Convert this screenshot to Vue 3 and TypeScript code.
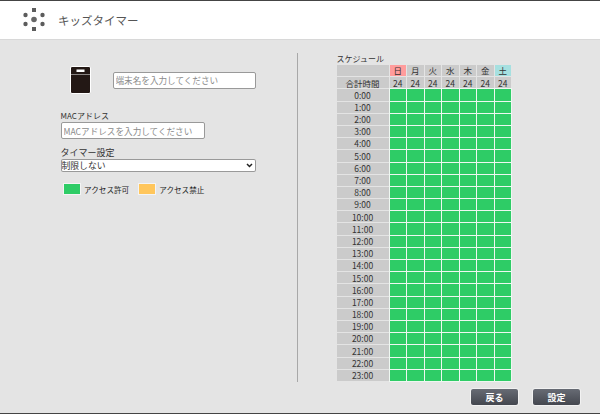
<script setup lang="ts">
const days = [
  { label: '日', cls: 'sun' },
  { label: '月', cls: '' },
  { label: '火', cls: '' },
  { label: '水', cls: '' },
  { label: '木', cls: '' },
  { label: '金', cls: '' },
  { label: '土', cls: 'sat' },
]
const hours = Array.from({ length: 24 }, (_, i) => `${i}:00`)
const dots = [
  { x: 5.5, y: 7 },
  { x: 22.5, y: 7 },
  { x: 5.5, y: 16 },
  { x: 22.5, y: 16 },
]
</script>

<template>
  <div class="window">
    <header class="head">
      <svg class="logo" width="28" height="24" viewBox="0 0 28 24">
        <circle cx="14" cy="11.5" r="2.8" fill="#666" />
        <rect x="12" y="0" width="4" height="4" fill="#5c5c5c" />
        <rect x="12" y="19" width="4" height="4" fill="#5c5c5c" />
        <circle v-for="d in dots" :key="d.x + '-' + d.y" :cx="d.x" :cy="d.y" r="2.2" fill="#5c5c5c" />
      </svg>
      <h1 class="title">キッズタイマー</h1>
    </header>

    <main class="body">
      <section class="left">
        <div class="device">
          <svg class="device-icon" width="21" height="28" viewBox="0 0 21 28">
            <rect x="0.5" y="0.5" width="20" height="27" rx="1.5" fill="#231815" stroke="#fff" />
            <rect x="6.5" y="3.5" width="8" height="2.5" fill="#fff" />
            <rect x="1" y="8" width="19" height="1" fill="#8a8583" />
          </svg>
          <input class="field name" type="text" placeholder="端末名を入力してください">
        </div>

        <label class="label mac-label">MACアドレス</label>
        <input class="field mac" type="text" placeholder="MACアドレスを入力してください">

        <label class="label timer-label">タイマー設定</label>
        <div class="timer-wrap">
          <select class="timer">
            <option>制限しない</option>
          </select>
          <svg class="chevron" width="7" height="5" viewBox="0 0 7 5">
            <path d="M1 1l2.5 2.5L6 1" fill="none" stroke="#222" stroke-width="1.5" />
          </svg>
        </div>

        <div class="legend">
          <span class="swatch allow"></span>
          <span class="legend-text">アクセス許可</span>
          <span class="swatch deny"></span>
          <span class="legend-text">アクセス禁止</span>
        </div>
      </section>

      <div class="divider"></div>

      <section class="right">
        <div class="sched-title">スケジュール</div>
        <div class="grid">
          <div class="cell gray"></div>
          <div v-for="d in days" :key="d.label" class="cell gray" :class="d.cls">{{ d.label }}</div>
          <div class="cell gray">合計時間</div>
          <div v-for="d in days" :key="'t' + d.label" class="cell gray">24</div>
          <template v-for="h in hours" :key="h">
            <div class="cell gray">{{ h }}</div>
            <div v-for="d in days" :key="h + d.label" class="cell on"></div>
          </template>
        </div>
      </section>
    </main>

    <footer class="foot">
      <button class="btn" type="button">戻る</button>
      <button class="btn" type="button">設定</button>
    </footer>
  </div>
</template>

<style>
html,
body {
  margin: 0;
  padding: 0;
}
</style>

<style scoped>
.window {
  width: 600px;
  height: 414px;
  box-sizing: border-box;
  display: flex;
  flex-direction: column;
  overflow: hidden;
  background: #e4e4e4;
  border-top: 1px solid #444;
  border-bottom: 1px solid #444;
  font-family: "Noto Sans CJK JP", "Liberation Sans", sans-serif;
  color: #333;
}

.head {
  height: 38px;
  flex-shrink: 0;
  display: flex;
  align-items: center;
  background: #fff;
  border-bottom: 1px solid #d8d8d8;
  padding-left: 20px;
}

.logo {
  margin-right: 10px;
}

.title {
  margin: 0;
  font-size: 11.5px;
  font-weight: 400;
  color: #555;
}

.body {
  flex: 1;
  display: flex;
  min-height: 0;
  padding-top: 13px;
}

.left {
  width: 297px;
  flex-shrink: 0;
  box-sizing: border-box;
  padding: 13px 0 0 60.5px;
  display: flex;
  flex-direction: column;
  align-items: flex-start;
}

.device {
  display: flex;
  align-items: center;
  margin-left: 9px;
  margin-bottom: 15px;
}

.device-icon {
  margin-right: 22px;
}

.field {
  box-sizing: border-box;
  height: 17px;
  padding: 0 2px;
  border: 1px solid #999;
  border-radius: 2px;
  background: #fff;
  font: inherit;
  font-size: 8.6px;
}

.field::placeholder {
  color: #8a8a8a;
}

.name {
  width: 143px;
}

.mac {
  width: 144px;
}

.label {
  font-size: 8px;
  line-height: 13px;
  color: #333;
}

.timer-label {
  margin-top: 7px;
  font-size: 9px;
}

.timer-wrap {
  position: relative;
  height: 13px;
}

.timer {
  display: block;
  box-sizing: border-box;
  width: 195px;
  height: 13px;
  padding: 0 0 0 1px;
  border: 0;
  border-radius: 2px;
  box-shadow: inset 0 0 0 1px #999;
  appearance: none;
  background: #fff;
  font: inherit;
  font-size: 8.8px;
  color: #333;
}

.chevron {
  position: absolute;
  top: 4px;
  right: 3px;
  pointer-events: none;
}

.legend {
  display: flex;
  align-items: center;
  margin: 11px 0 0 2.5px;
  font-size: 7.6px;
  color: #222;
}

.swatch {
  box-sizing: border-box;
  width: 18px;
  height: 12px;
  border: 1px solid #f4f4f4;
  margin-right: 3px;
}

.allow {
  background: #2ecc66;
}

.deny {
  background: #ffc65c;
}

.legend-text {
  margin-right: 9px;
}

.divider {
  width: 1px;
  height: 329px;
  background: #a8a8a8;
  flex-shrink: 0;
}

.right {
  padding-left: 38.5px;
}

.sched-title {
  font-size: 8px;
  line-height: 12px;
  color: #333;
}

.grid {
  width: 174.5px;
  display: grid;
  grid-template-columns: 52px repeat(7, 1fr);
  grid-auto-rows: 11.2px;
  gap: 1px;
}

.cell {
  display: flex;
  align-items: center;
  justify-content: center;
  font-size: 8.5px;
  line-height: 1;
  color: #333;
}

.gray {
  background: #cbcbcb;
}

.sun {
  background: #ff9c9c;
}

.sat {
  background: #a6e0e0;
}

.on {
  background: #2ecc66;
  box-shadow: 0 0 0 1px #eef7f1;
}

.foot {
  display: flex;
  justify-content: flex-end;
  gap: 13px;
  padding: 0 19px 7px 0;
}

.btn {
  width: 49px;
  height: 18px;
  padding: 0;
  border: 1px solid #f2f2f2;
  border-radius: 3px;
  background: linear-gradient(#676b74, #44474f);
  font: inherit;
  font-size: 9px;
  font-weight: 700;
  color: #fff;
}
</style>
